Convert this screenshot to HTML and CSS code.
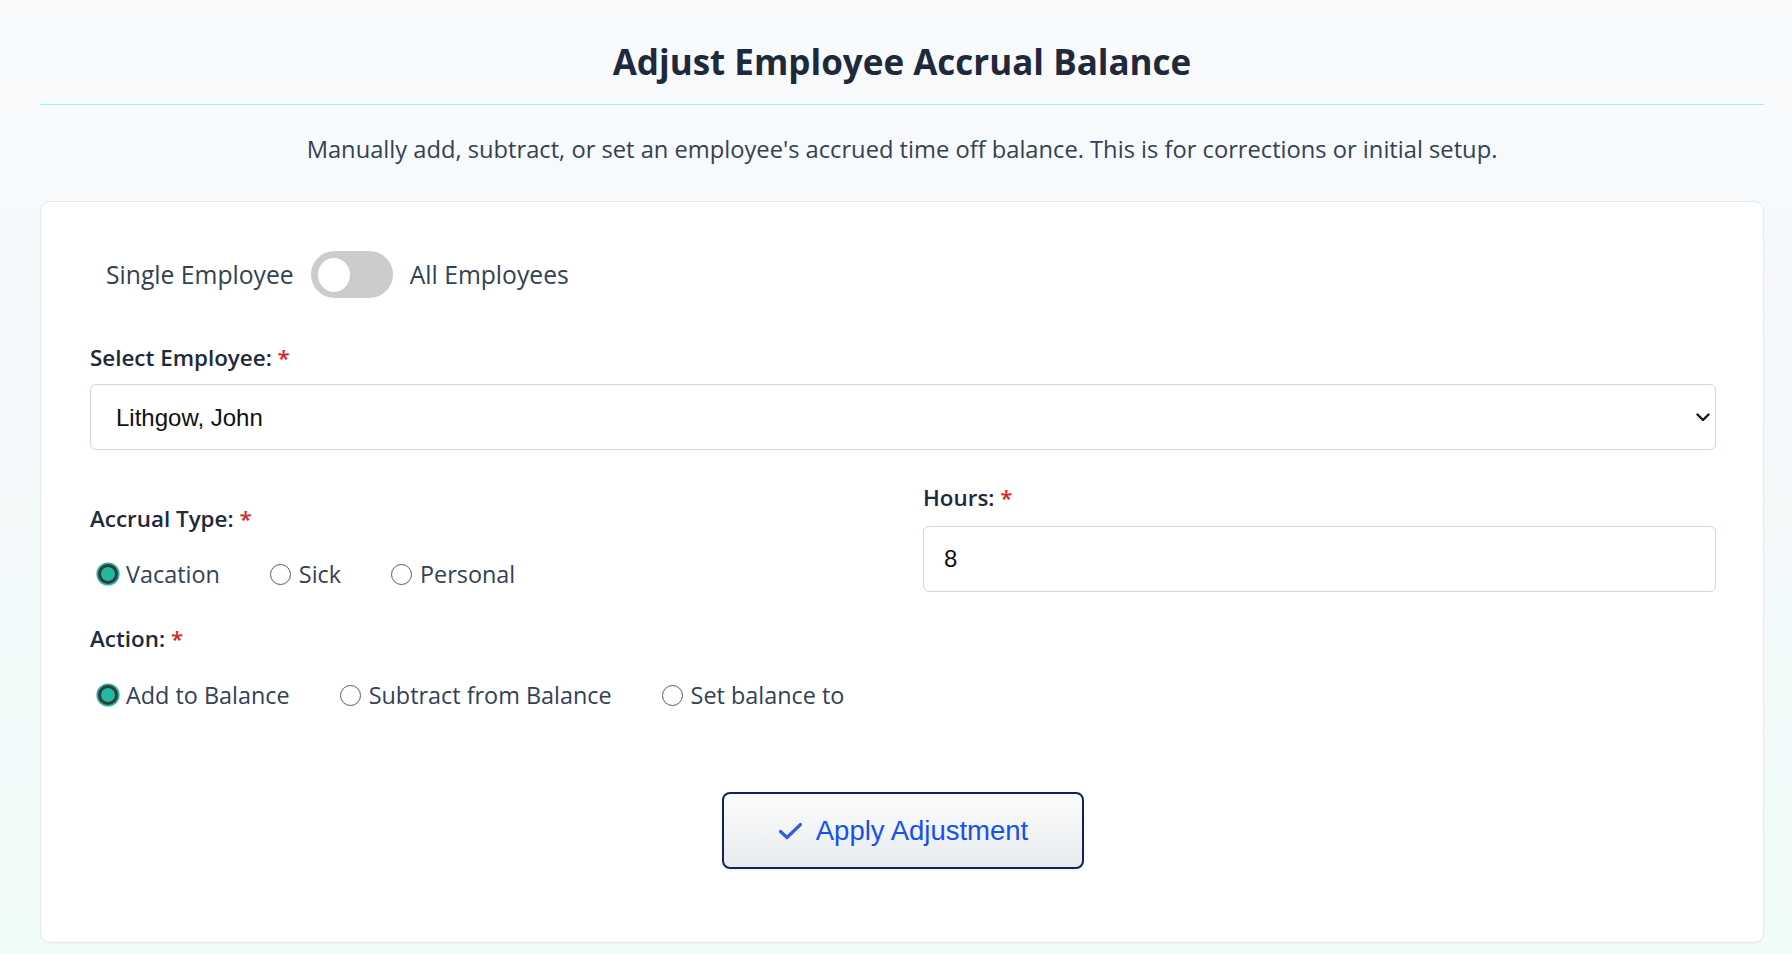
FILE: index.html
```html
<!DOCTYPE html>
<html lang="en">
<head>
<meta charset="utf-8">
<title>Adjust Employee Accrual Balance</title>
<link rel="stylesheet" href="styles.css">
</head>
<body>
<div class="page">
  <header class="page-header">
    <h1 class="title">Adjust Employee Accrual Balance</h1>
  </header>
  <p class="subtitle">Manually add, subtract, or set an employee's accrued time off balance. This is for corrections or initial setup.</p>

  <form class="card">
    <div class="mode-row">
      <span class="mode-label">Single Employee</span>
      <label class="switch"><input type="checkbox" class="switch-input"><span class="knob"></span></label>
      <span class="mode-label">All Employees</span>
    </div>

    <div class="field">
      <label class="field-label" for="emp">Select Employee: <span class="req">*</span></label>
      <div class="select-wrap">
        <select id="emp" class="control select"><option>Lithgow, John</option></select>
        <svg class="chevron" width="14" height="9" viewBox="0 0 14 9"><polyline points="1.5,1.5 7,7 12.5,1.5" fill="none" stroke="#111" stroke-width="2.4" stroke-linecap="round" stroke-linejoin="round"/></svg>
      </div>
    </div>

    <div class="grid">
      <div class="col-left">
        <div class="field-label">Accrual Type: <span class="req">*</span></div>
        <div class="radio-row">
          <label class="radio-item"><input type="radio" name="type" class="radio" checked><span>Vacation</span></label>
          <label class="radio-item"><input type="radio" name="type" class="radio"><span>Sick</span></label>
          <label class="radio-item"><input type="radio" name="type" class="radio"><span>Personal</span></label>
        </div>
        <div class="field-label action-label">Action: <span class="req">*</span></div>
        <div class="radio-row">
          <label class="radio-item"><input type="radio" name="action" class="radio" checked><span>Add to Balance</span></label>
          <label class="radio-item"><input type="radio" name="action" class="radio"><span>Subtract from Balance</span></label>
          <label class="radio-item"><input type="radio" name="action" class="radio"><span>Set balance to</span></label>
        </div>
      </div>
      <div class="col-right">
        <label class="field-label" for="hours">Hours: <span class="req">*</span></label>
        <input id="hours" class="control input" type="text" value="8">
      </div>
    </div>

    <div class="actions">
      <button type="button" class="apply-btn">
        <svg class="check" width="25" height="18" viewBox="0 0 25 18"><polyline points="2.5,9.5 9,15.5 22.5,2.5" fill="none" stroke="#2f5fe0" stroke-width="3.2" stroke-linecap="round" stroke-linejoin="round"/></svg>
        <span>Apply Adjustment</span>
      </button>
    </div>
  </form>
</div>
</body>
</html>
```
FILE: styles.css
```css
* { box-sizing: border-box; }

html, body {
  margin: 0;
  height: 100%;
}

body {
  background: linear-gradient(180deg, #f8fafc 0%, #f6f9fb 40%, #f0fcfa 100%);
  font-family: "Open Sans", "Noto Sans", sans-serif;
  color: #334155;
  overflow: hidden;
}

.page {
  padding: 41px 28px 0 40px;
}

.page-header {
  border-bottom: 1px solid #99f6e4;
  padding-bottom: 21px;
}

.title {
  margin: 0;
  text-align: center;
  font-size: 35px;
  line-height: 42px;
  font-weight: 700;
  color: #1e293b;
}

.subtitle {
  margin: 28px 0 0;
  text-align: center;
  font-size: 23.7px;
  line-height: 33px;
  color: #334155;
}

.card {
  margin-top: 35px;
  background: #ffffff;
  border: 1px solid #e4e9ee;
  border-radius: 10px;
  padding: 49px 47px 73px 49px;
  box-shadow: 0 1px 2px rgba(15, 23, 42, 0.03);
}

.mode-row {
  display: flex;
  align-items: center;
  gap: 17px;
  padding-left: 16px;
  height: 47px;
}

.mode-label {
  font-size: 24.7px;
  font-weight: 500;
  color: #334155;
}

.switch {
  position: relative;
  display: inline-block;
  width: 82px;
  height: 47px;
  border-radius: 24px;
  background: #cccccc;
}

.switch-input {
  position: absolute;
  opacity: 0;
  width: 0;
  height: 0;
  margin: 0;
}

.knob {
  position: absolute;
  left: 7px;
  top: 6.5px;
  width: 32px;
  height: 34px;
  border-radius: 50%;
  background: #ffffff;
}

.field {
  margin-top: 45px;
}

.field-label {
  display: block;
  font-size: 22.4px;
  line-height: 30px;
  font-weight: 600;
  color: #1e293b;
}

.req {
  color: #dc2626;
}

.select-wrap {
  position: relative;
  margin-top: 11px;
}

.control {
  display: block;
  width: 100%;
  height: 66px;
  border: 1px solid #cbd5e1;
  border-radius: 6px;
  background: #ffffff;
  font-family: "Liberation Sans", Arial, sans-serif;
  font-size: 24px;
  color: #111111;
  outline: none;
}

.select {
  appearance: none;
  -webkit-appearance: none;
  padding: 0 48px 0 25px;
}

.chevron {
  position: absolute;
  right: 6px;
  top: 29px;
  pointer-events: none;
}

.input {
  margin-top: 13px;
  padding: 0 20px;
}

.grid {
  display: grid;
  grid-template-columns: 1fr 1fr;
  column-gap: 40px;
  margin-top: 33px;
}

.col-left {
  padding-top: 21px;
}

.radio-row {
  display: flex;
  align-items: center;
  gap: 43px;
  height: 34px;
  margin-top: 23px;
}

.action-label {
  margin-top: 33px;
}

.action-label + .radio-row {
  margin-top: 24px;
}

.radio-item {
  display: flex;
  align-items: center;
  font-size: 23.4px;
  line-height: 34px;
  color: #334155;
}

.radio {
  appearance: none;
  -webkit-appearance: none;
  width: 21px;
  height: 21px;
  margin: 0 8px 0 7px;
  border: 1.6px solid #5a5a5a;
  border-radius: 50%;
  background: #ffffff;
}

.radio:checked {
  width: 20px;
  height: 20px;
  margin: 0 8px 0 8px;
  border: 3px solid #383838;
  background: #1db9a0;
  box-shadow: 0 0 0 1.6px #1db9a0;
}

.actions {
  display: flex;
  justify-content: center;
  margin-top: 80px;
}

.apply-btn {
  display: flex;
  align-items: center;
  justify-content: center;
  gap: 13px;
  width: 362px;
  height: 77px;
  border: 2px solid #14225c;
  border-radius: 8px;
  background: linear-gradient(180deg, #fbfcfd 0%, #f1f3f5 55%, #e7eaee 100%);
  box-shadow: 0 2px 3px rgba(15, 23, 42, 0.06);
  font-family: "Liberation Sans", Arial, sans-serif;
  font-size: 27.5px;
  color: #1550f0;
  cursor: pointer;
}

.check {
  display: block;
}
```
